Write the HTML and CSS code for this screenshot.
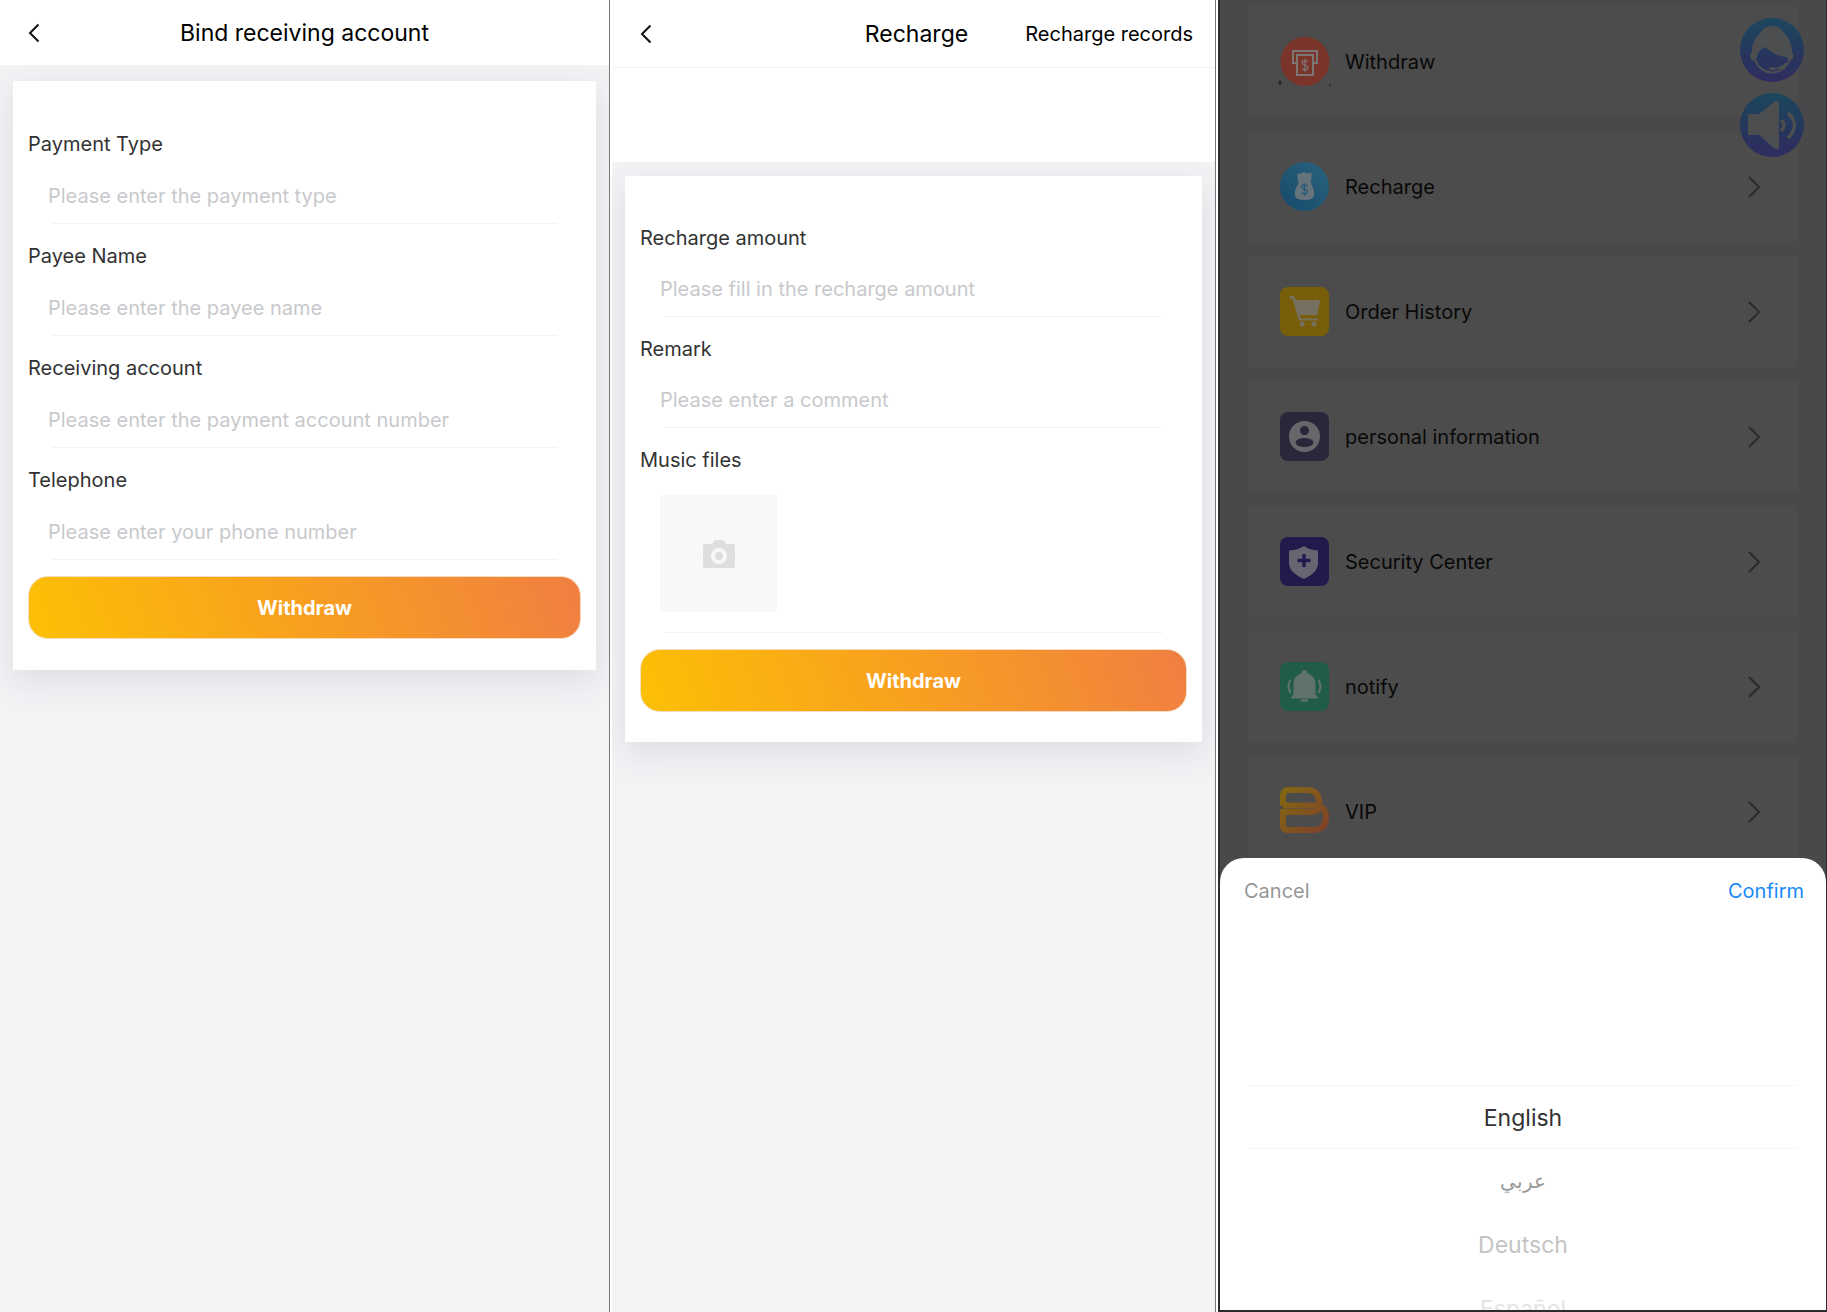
FILE: index.html
```html
<!DOCTYPE html>
<html lang="en">
<head>
<meta charset="utf-8">
<meta name="viewport" content="width=device-width, initial-scale=1">
<title>Account</title>
<link rel="stylesheet" href="styles.css">
</head>
<body>
<main class="screens">

  <section class="screen screen-bind">
    <header class="topbar">
      <button class="back" type="button" aria-label="Back">
        <svg width="12" height="20" viewBox="0 0 12 20"><path d="M10.500 1.500 2 10l8.500 8.500"/></svg>
      </button>
      <h1 class="title">Bind receiving account</h1>
    </header>
    <form class="card">
      <div class="field">
        <label for="ptype">Payment Type</label>
        <div class="control"><input id="ptype" type="text" placeholder="Please enter the payment type"></div>
      </div>
      <div class="field">
        <label for="payee">Payee Name</label>
        <div class="control"><input id="payee" type="text" placeholder="Please enter the payee name"></div>
      </div>
      <div class="field">
        <label for="account">Receiving account</label>
        <div class="control"><input id="account" type="text" placeholder="Please enter the payment account number"></div>
      </div>
      <div class="field">
        <label for="phone">Telephone</label>
        <div class="control"><input id="phone" type="tel" placeholder="Please enter your phone number"></div>
      </div>
      <button class="submit" type="button">Withdraw</button>
    </form>
  </section>

  <section class="screen screen-recharge">
    <header class="topbar topbar-ruled">
      <button class="back" type="button" aria-label="Back">
        <svg width="12" height="20" viewBox="0 0 12 20"><path d="M10.500 1.500 2 10l8.500 8.500"/></svg>
      </button>
      <h1 class="title">Recharge</h1>
      <a class="records" href="#records">Recharge records</a>
    </header>
    <div class="banner"></div>
    <form class="card">
      <div class="field">
        <label for="amount">Recharge amount</label>
        <div class="control"><input id="amount" type="text" placeholder="Please fill in the recharge amount"></div>
      </div>
      <div class="field">
        <label for="remark">Remark</label>
        <div class="control"><input id="remark" type="text" placeholder="Please enter a comment"></div>
      </div>
      <div class="field field-upload">
        <span class="label">Music files</span>
        <div class="control">
          <button class="upload" type="button" aria-label="Add file">
            <svg width="32" height="28" viewBox="0 0 32 28"><path fill="#dcdee0" fill-rule="evenodd" d="M2 4h7l2-3.200Q11.500 0 12.500 0h7q1 0 1.500.8L23 4h7q2 0 2 2v20q0 2-2 2H2q-2 0-2-2V6q0-2 2-2Zm14 4a8 8 0 1 0 0 16 8 8 0 0 0 0-16Z"/><circle cx="16" cy="16" r="4" fill="#dcdee0"/></svg>
          </button>
        </div>
      </div>
      <button class="submit" type="button">Withdraw</button>
    </form>
  </section>

  <section class="screen screen-menu">
    <nav class="menu">
      <a class="item" href="#withdraw">
        <svg class="icon" viewBox="0 0 49 49"><circle cx="25" cy="24.500" r="24.500" fill="#7a3429"/><g fill="none" stroke="#7d7474" stroke-width="2"><path d="M17 26h-4V14h24v12h-4"/><path d="M17 18h16v20H17z"/></g><path d="M28 25q-3-2.500-5.500-.5-1.500 2.500 2.500 3.500 4 1.200 2.500 4-2.500 2-5.500-.5M25 22v13" fill="none" stroke="#7d7474" stroke-width="1.300"/><path d="M-2 46h4M0 43v5M49 48h2" stroke="#262628" stroke-width="1.500"/></svg>
        <span>Withdraw</span>
      </a>
      <a class="item" href="#recharge">
        <svg class="icon" viewBox="0 0 49 49"><defs><linearGradient id="gb" x1="1" y1="0" x2="0" y2="1"><stop offset="0" stop-color="#2a637f"/><stop offset="1" stop-color="#17496a"/></linearGradient></defs><circle cx="24.500" cy="24.500" r="24.500" fill="url(#gb)"/><path fill="#65737d" d="M17 11.500q2 1 4-.5 2.500-1.500 5 0 3 1 5-.5 1.500 3 .5 5.500-1 4 0 6.500Q35 28 34 34q-1 4-9.500 4T15 34q-1-6 3-11.500 1-2.500-.5-6Z"/><path d="M27.500 24q-3-2.500-5.500-.5-1.500 2.500 2.500 3.500 4 1.200 2.500 4-2.500 2-5.500-.5M24.500 21v13" fill="none" stroke="#285a78" stroke-width="1.300"/></svg>
        <span>Recharge</span>
        <svg class="chev" viewBox="0 0 13 22"><path d="M1 1l10 10L1 21"/></svg>
      </a>
      <a class="item" href="#orders">
        <svg class="icon" viewBox="0 0 49 49"><rect width="49" height="49" rx="8" fill="#785d0a"/><path fill="#757060" d="M9 9h5l2 4h24l-2.500 15H20l1 3.500h17v2H19L12.500 12H10Z"/><circle cx="22" cy="37" r="2.500" fill="#757060"/><circle cx="34" cy="37" r="2.500" fill="#757060"/></svg>
        <span>Order History</span>
        <svg class="chev" viewBox="0 0 13 22"><path d="M1 1l10 10L1 21"/></svg>
      </a>
      <a class="item" href="#profile">
        <svg class="icon" viewBox="0 0 49 49"><rect width="49" height="49" rx="8" fill="#2b273b"/><circle cx="24.500" cy="24.500" r="15.500" fill="#67666b"/><circle cx="24.500" cy="18.500" r="4.500" fill="#2b273b"/><ellipse cx="24.500" cy="30.500" rx="9" ry="4.500" fill="#2b273b"/></svg>
        <span>personal information</span>
        <svg class="chev" viewBox="0 0 13 22"><path d="M1 1l10 10L1 21"/></svg>
      </a>
      <a class="item" href="#security">
        <svg class="icon" viewBox="0 0 49 49"><rect width="49" height="49" rx="8" fill="#22194c"/><path fill="#676570" d="M24 9q5 4 14 4.500v14Q37 36 24 42 10 36 9 27.500v-14Q18 13 24 9Z"/><path d="M24 17v13M17.500 23.500h13" stroke="#22194c" stroke-width="3.500"/></svg>
        <span>Security Center</span>
        <svg class="chev" viewBox="0 0 13 22"><path d="M1 1l10 10L1 21"/></svg>
      </a>
      <a class="item" href="#notify">
        <svg class="icon" viewBox="0 0 49 49"><rect width="49" height="49" rx="8" fill="#215c49"/><path fill="#5f726b" d="M24.500 8q2.500 0 3 3 8 3 8 12v9l3 4.500h-28l3-4.500v-9q0-9 8-12 .5-3 3-3Z"/><path d="M21 38.500h7" stroke="#5f726b" stroke-width="2.500"/><path d="M10.500 18q-4 6.500 0 13M38.500 18q4 6.500 0 13" fill="none" stroke="#5f726b" stroke-width="2"/></svg>
        <span>notify</span>
        <svg class="chev" viewBox="0 0 13 22"><path d="M1 1l10 10L1 21"/></svg>
      </a>
      <a class="item" href="#vip">
        <svg class="icon" viewBox="0 0 49 49"><defs><linearGradient id="gv" gradientUnits="userSpaceOnUse" x1="0" y1="0" x2="46" y2="46"><stop offset="0" stop-color="#846910"/><stop offset="1" stop-color="#80412b"/></linearGradient></defs><g fill="none" stroke="url(#gv)" stroke-width="6" stroke-linejoin="round"><path d="M3 19V9q0-6 6-6h18q11 0 12 11v3q0 8-8 8H3"/><path d="M3 18.500h34q9 2.500 9 11.500 0 13-13 13H8q-5 0-5-5V22"/></g></svg>
        <span>VIP</span>
        <svg class="chev" viewBox="0 0 13 22"><path d="M1 1l10 10L1 21"/></svg>
      </a>
    </nav>

    <div class="floaters">
      <button class="floater" type="button" aria-label="Support">
        <svg viewBox="0 0 64 64"><defs><linearGradient id="gf" x1="0" y1="0" x2="0" y2="1"><stop offset="0" stop-color="#1c475e"/><stop offset=".6" stop-color="#26355c"/><stop offset="1" stop-color="#302c60"/></linearGradient></defs><circle cx="32" cy="32" r="32" fill="url(#gf)"/><path fill="#4c4e50" d="M11 41q-2-4 1-7-1-10 8-19 4-7 12-7t12 7q8 7 8 19 3 4 0 8-4 2-5-3-11 0-22-10-7 3-8 10-2 6-6 2Z"/><path d="M15 42q5 12 17 12.500Q45 54 50 41M32 51q10 0 15-6" fill="none" stroke="#4c4e50" stroke-width="2"/><ellipse cx="32" cy="50.500" rx="3" ry="1.500" fill="#4c4e50"/></svg>
      </button>
      <button class="floater" type="button" aria-label="Sound">
        <svg viewBox="0 0 64 64"><circle cx="32" cy="32" r="32" fill="url(#gf)"/><path fill="#4c4e50" d="M8 21h11L34 9q5-3 5 2v43q0 4-5 1L19 42H8Z"/><path d="M41 27q6 5 0 11" fill="none" stroke="#4c4e50" stroke-width="3.500"/><path d="M48 20q13 12 0 25" fill="none" stroke="#4c4e50" stroke-width="3.500"/></svg>
      </button>
    </div>

    <div class="sheet" role="dialog" aria-label="Language">
      <div class="sheet-bar">
        <button class="cancel" type="button">Cancel</button>
        <button class="confirm" type="button">Confirm</button>
      </div>
      <ul class="wheel">
        <li class="selected">English</li>
        <li class="near" lang="ar">عربي</li>
        <li class="far">Deutsch</li>
        <li class="edge">Español</li>
      </ul>
    </div>
  </section>

</main>
</body>
</html>
```
FILE: styles.css
```css
* { box-sizing: border-box; }

body {
  margin: 0;
  font-family: Inter, "Liberation Sans", sans-serif;
  font-size: 20px;
  line-height: 24px;
  color: #323233;
}

button, input { font: inherit; color: inherit; border: 0; background: none; padding: 0; margin: 0; }
button { cursor: pointer; }
a { color: inherit; text-decoration: none; }
svg { display: block; }

.screens {
  display: grid;
  grid-template-columns: 610fr 606fr 611fr;
  height: 100vh;
  min-height: 1000px;
}

.screen { position: relative; min-width: 0; background: #f2f3f5; overflow: hidden; }
.screen-bind { border-right: 1px solid #777; }
.screen-recharge { border-left: 2px solid #fff; border-right: 1px solid #777; }

.topbar {
  position: relative;
  display: grid;
  grid-template-columns: 1fr auto 1fr;
  align-items: center;
  height: 65px;
  padding: 0 28px;
  background: #fff;
  color: #000;
}
.topbar-ruled { height: 68px; padding: 0 22px 0 28px; border-bottom: 1px solid #f4f4f5; }
.back { justify-self: start; }
.back svg { fill: none; stroke: #111; stroke-width: 2; }
.title { margin: 0; font-size: 23px; line-height: 32px; font-weight: 400; }
.records { justify-self: end; }
.banner { position: relative; height: 94px; background: #fff; }

.card {
  display: flex;
  flex-direction: column;
  gap: 20px;
  margin: 16px 13px 0;
  padding: 51px 15px 31px;
  background: #fff;
  box-shadow: 0 10px 32px rgba(60, 64, 72, .12);
}
.screen-recharge .card { margin-top: 14px; padding: 50px 15px 30px; }

.field { display: flex; flex-direction: column; gap: 13px; }
.screen-recharge .field { gap: 12px; }
.screen-recharge .field-upload { gap: 23px; }
.control { display: flex; flex-direction: column; }
.control::after { content: ""; height: 1px; margin: 0 24px; background: #f4f4f5; }
.control input { height: 54px; padding: 0 20px; outline: 0; width: 100%; }
.control input::placeholder { color: #c8c9cc; opacity: 1; }
.upload {
  display: grid;
  place-items: center;
  width: 117px;
  height: 117px;
  margin: 0 0 20px 20px;
  background: #f7f8fa;
}

.submit {
  height: 63px;
  margin-top: -4px;
  border: 1px solid #f3dcc0;
  border-radius: 20px;
  background: linear-gradient(70deg, #fcc005, #f89f20 50%, #f07f42);
  color: #fff;
  font-weight: 700;
}

.screen-menu {
  margin-left: 2px;
  background: #49494b;
  border: solid #2c2c2e;
  border-width: 0 1px 2px 2px;
}
.menu { display: flex; flex-direction: column; gap: 14px; padding: 6px 28px 0; }
.item {
  display: flex;
  align-items: center;
  gap: 16px;
  height: 111px;
  padding: 0 37px 0 32px;
  background: #4c4c4c;
  color: #080808;
}
.item span { flex: 1; }
.icon { width: 49px; height: 49px; overflow: visible; }
.chev { width: 13px; height: 22px; fill: none; stroke: #2a2a2c; stroke-width: 2; }

.floaters {
  position: absolute;
  top: 18px;
  right: 22px;
  display: flex;
  flex-direction: column;
  gap: 11px;
}
.floater, .floater svg { width: 64px; height: 64px; }

.sheet {
  position: absolute;
  left: 0;
  right: 0;
  bottom: 0;
  height: 452px;
  overflow: hidden;
  border-radius: 24px 24px 0 0;
  background: #fff;
}
.sheet-bar { display: flex; justify-content: space-between; height: 66px; padding: 0 22px 0 24px; }
.cancel { color: #969799; }
.confirm { color: #1989fa; }

.wheel { list-style: none; margin: 0; padding: 161px 28px 0; font-size: 23px; text-align: center; }
.wheel li { height: 64px; line-height: 64px; }
.wheel .selected { border: solid #f5f5f6; border-width: 1px 0; }
.wheel .near { color: #98999a; font-size: 20px; }
.far { color: #c4c4c5; }
.edge { color: #e4e4e5; }
```
